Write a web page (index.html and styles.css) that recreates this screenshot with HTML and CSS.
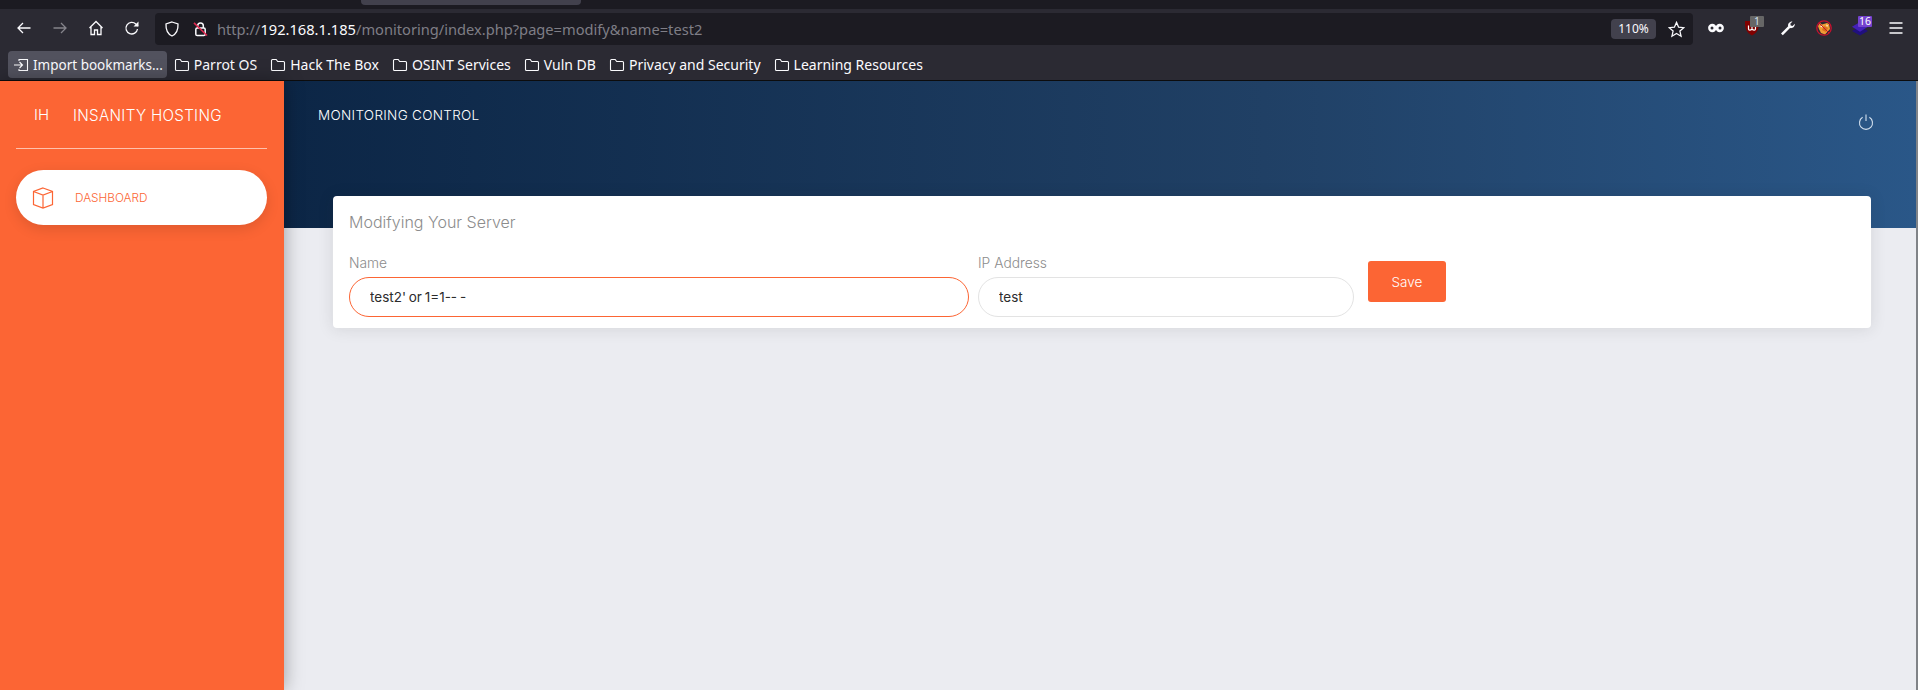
FILE: index.html
```html
<!DOCTYPE html>
<html lang="en">
<head>
    <meta charset="UTF-8">
    <meta name="viewport" content="width=device-width, initial-scale=1.0">
    <title>Monitoring Control</title>
    <link rel="stylesheet" href="styles.css">
</head>
<body>
    <div class="tabstrip"><div class="tab-edge"></div></div>

    <div class="toolbar">
        <div class="nav-buttons">
            <svg class="tool-icon" viewBox="0 0 16 16"><path d="M14.500 8H2M7 3L2 8l5 5"/></svg>
            <svg class="tool-icon dim" viewBox="0 0 16 16"><path d="M1.500 8H14M9 3l5 5-5 5"/></svg>
            <svg class="tool-icon" viewBox="0 0 16 16"><path d="M1.500 8L8 1.500 14.500 8M3 7v7.500h3.500V10h3v4.500H13V7"/></svg>
            <svg class="tool-icon" viewBox="0 0 16 16"><path d="M13.500 9a5.800 5.800 0 1 1-1.700-5L14 6"/><path class="arrow-head" d="M14.500 1.500V6.500H9.500z"/></svg>
        </div>
        <div class="urlbar">
            <svg class="shield" viewBox="0 0 16 16"><path d="M8 1l6 2c.3 6-1.700 10-6 12C3.700 13 1.700 9 2 3z"/></svg>
            <svg class="lock" viewBox="0 0 16 16">
                <rect x="3" y="7" width="10" height="8" rx="1.500" fill="none" stroke="#fbfbfe" stroke-width="1.600"/>
                <path d="M5 7V4.500a3 3 0 0 1 6 0V7" fill="none" stroke="#fbfbfe" stroke-width="1.600"/>
                <path d="M1 1.500L15 15" stroke="#e22850" stroke-width="1.600"/>
            </svg>
            <div class="url"><span class="url-dim">http://</span>192.168.1.185<span class="url-dim">/monitoring/index.php?page=modify&amp;name=test2</span></div>
            <div class="zoom-level">110%</div>
            <svg class="star" viewBox="0 0 16 16"><path d="M8 1.300l2 4.500 4.900.5-3.700 3.200 1.100 4.800L8 11.800l-4.300 2.500 1.100-4.800L1.100 6.300 6 5.800z"/></svg>
        </div>
        <div class="extensions">
            <div class="ext">
                <svg viewBox="0 0 16 16"><circle cx="4.300" cy="8" r="4.200" fill="#fbfbfe"/><circle cx="11.700" cy="8" r="4.200" fill="#fbfbfe"/><circle cx="4" cy="8" r="1.500" fill="#2b2a33"/><circle cx="12" cy="8" r="1.500" fill="#2b2a33"/></svg>
            </div>
            <div class="ext">
                <svg viewBox="0 0 16 16"><path d="M1 1h14c.3 7-1.200 11.500-7 14.500C2.200 12.500.7 8 1 1z" fill="#800000"/><path d="M4.500 5.500v3.500c0 1.500 2 1.500 3.500.2 1.500 1.300 3.500 1.300 3.500-.2V5.500M8 5.500v3.700" fill="none" stroke="#fff" stroke-width="1.200"/></svg>
                <span class="ext-badge badge-grey">1</span>
            </div>
            <div class="ext">
                <svg viewBox="0 0 16 16"><path d="M1 13.500l7.200-7.200c-.7-2.400 1.400-5 4.300-4.800L10.300 3.700l.4 1.900 1.900.4 2.200-2.200c.3 2.900-2.400 5-4.800 4.300L2.800 15.300z" fill="#fbfbfe"/></svg>
            </div>
            <div class="ext">
                <svg viewBox="0 0 16 16"><path d="M2 6l2-3 2 1.500 5-1.500 2 1 1 5-5 5.500-4-1.500-2-4z" fill="#f09a35"/><path d="M6 10l2-4 4 2-2 4z" fill="#d96f1d"/><path d="M4 6.500l2-1 .5 2zM10 4.500l2 1-1 1.500z" fill="#fdf3e4"/><circle cx="8" cy="8" r="7.200" fill="none" stroke="#c8102e" stroke-width="1.300"/><path d="M3 3l10 10" stroke="#c8102e" stroke-width="1"/></svg>
            </div>
            <div class="ext">
                <svg viewBox="0 0 16 16"><path d="M8 6.500l8 4.500-8 4.500L0 11z" fill="#20107e"/><path d="M8 2l8 4.800-8 5L0 6.800z" fill="#4420b8"/></svg>
                <span class="ext-badge badge-purple">16</span>
            </div>
            <div class="ext">
                <svg viewBox="0 0 16 16"><path d="M1.500 3h13M1.500 8h13M1.500 13h13" stroke="#fbfbfe" stroke-width="1.500" fill="none"/></svg>
            </div>
        </div>
    </div>

    <div class="bookmarks">
        <div class="bookmark import">
            <svg class="bookmark-icon" viewBox="0 0 16 16"><path d="M6 4V2.500h8.500v11H6V12M1 8h8M6.500 5L9.500 8l-3 3"/></svg>
            Import bookmarks...
        </div>
        <div class="bookmark"><svg class="bookmark-icon" viewBox="0 0 16 16"><path d="M1.500 3.500a1 1 0 0 1 1-1h3.700l1.500 2h5.800a1 1 0 0 1 1 1v7a1 1 0 0 1-1 1h-11a1 1 0 0 1-1-1z"/></svg>Parrot OS</div>
        <div class="bookmark"><svg class="bookmark-icon" viewBox="0 0 16 16"><path d="M1.500 3.500a1 1 0 0 1 1-1h3.700l1.500 2h5.800a1 1 0 0 1 1 1v7a1 1 0 0 1-1 1h-11a1 1 0 0 1-1-1z"/></svg>Hack The Box</div>
        <div class="bookmark"><svg class="bookmark-icon" viewBox="0 0 16 16"><path d="M1.500 3.500a1 1 0 0 1 1-1h3.700l1.500 2h5.800a1 1 0 0 1 1 1v7a1 1 0 0 1-1 1h-11a1 1 0 0 1-1-1z"/></svg>OSINT Services</div>
        <div class="bookmark"><svg class="bookmark-icon" viewBox="0 0 16 16"><path d="M1.500 3.500a1 1 0 0 1 1-1h3.700l1.500 2h5.800a1 1 0 0 1 1 1v7a1 1 0 0 1-1 1h-11a1 1 0 0 1-1-1z"/></svg>Vuln DB</div>
        <div class="bookmark"><svg class="bookmark-icon" viewBox="0 0 16 16"><path d="M1.500 3.500a1 1 0 0 1 1-1h3.700l1.500 2h5.800a1 1 0 0 1 1 1v7a1 1 0 0 1-1 1h-11a1 1 0 0 1-1-1z"/></svg>Privacy and Security</div>
        <div class="bookmark"><svg class="bookmark-icon" viewBox="0 0 16 16"><path d="M1.500 3.500a1 1 0 0 1 1-1h3.700l1.500 2h5.800a1 1 0 0 1 1 1v7a1 1 0 0 1-1 1h-11a1 1 0 0 1-1-1z"/></svg>Learning Resources</div>
    </div>

    <div class="wrapper">
        <div class="sidebar">
            <div class="logo">
                <span class="logo-mini">IH</span>
                <span class="logo-name">INSANITY HOSTING</span>
            </div>
            <div class="nav-item">
                <svg class="nav-icon" viewBox="0 0 22 22"><path d="M11 1l9.500 3.500v13L11 21l-9.500-3.500v-13zM1.500 4.500L11 8l9.500-3.500M11 8v13"/></svg>
                <span>DASHBOARD</span>
            </div>
        </div>
        <div class="main">
            <div class="panel-header">
                <span class="brand">MONITORING CONTROL</span>
                <svg class="power" viewBox="0 0 16 16"><path d="M4.600 3.300a6.500 6.500 0 1 0 6.800 0M8 .5v6.500"/></svg>
            </div>
            <div class="card">
                <h5 class="card-title">Modifying Your Server</h5>
                <form class="form-row">
                    <div class="field field-name">
                        <label for="name">Name</label>
                        <input type="text" id="name" class="focused" value="test2' or 1=1-- -">
                    </div>
                    <div class="field field-ip">
                        <label for="ip">IP Address</label>
                        <input type="text" id="ip" value="test">
                    </div>
                    <button type="button" class="save">Save</button>
                </form>
            </div>
        </div>
        <div class="scrollbar"></div>
    </div>
</body>
</html>
```

FILE: styles.css
```css
* {
    box-sizing: border-box;
}

html,
body {
    height: 100%;
}

body {
    margin: 0;
    display: flex;
    flex-direction: column;
    overflow: hidden;
    font-family: 'Inter', sans-serif;
    background-color: #ebecf1;
}

/* browser chrome */
.tabstrip {
    height: 9px;
    padding-left: 361px;
    background-color: #1c1b22;
}

.tab-edge {
    width: 220px;
    height: 5px;
    background-color: #42414d;
    border-radius: 0 0 4px 4px;
}

.toolbar {
    height: 38px;
    display: flex;
    align-items: center;
    background-color: #2b2a33;
    color: #fbfbfe;
}

.nav-buttons {
    width: 155px;
    display: flex;
    gap: 20px;
    padding-left: 16px;
}

.tool-icon {
    width: 16px;
    height: 16px;
    fill: none;
    stroke: #fbfbfe;
    stroke-width: 1.300;
}

.tool-icon.dim {
    stroke: #85848b;
}

.arrow-head {
    fill: #fbfbfe;
    stroke: none;
}

.urlbar {
    width: 1538px;
    height: 32px;
    margin-top: 2px;
    display: flex;
    align-items: center;
    padding-left: 9px;
    background-color: #1c1b22;
    border-radius: 4px;
}

.shield {
    width: 16px;
    height: 16px;
    fill: none;
    stroke: #fbfbfe;
    stroke-width: 1.300;
}

.lock {
    width: 15px;
    height: 16px;
    margin-left: 13px;
}

.url {
    flex: 1;
    margin-left: 9px;
    font-family: 'Noto Sans', sans-serif;
    font-size: 14.650px;
    color: #fbfbfe;
}

.url-dim {
    color: #7f7e86;
}

.zoom-level {
    width: 45px;
    height: 20px;
    margin-right: 12px;
    font-family: 'Noto Sans', sans-serif;
    font-size: 12px;
    line-height: 20px;
    text-align: center;
    background-color: #42414d;
    border-radius: 4px;
}

.star {
    width: 17px;
    height: 17px;
    margin-right: 8px;
    fill: none;
    stroke: #fbfbfe;
    stroke-width: 1.200;
}

.extensions {
    display: flex;
    flex: 1;
    padding-left: 5px;
}

.ext {
    position: relative;
    width: 36px;
    height: 36px;
    display: flex;
    align-items: center;
    justify-content: center;
}

.ext svg {
    width: 16px;
    height: 16px;
}

.ext-badge {
    position: absolute;
    top: 6px;
    left: 16px;
    width: 14px;
    height: 11px;
    font-family: 'Noto Sans', sans-serif;
    font-size: 10.500px;
    line-height: 11px;
    text-align: center;
    border-radius: 1px;
}

.badge-grey {
    background-color: #666666;
    color: #cfe0ef;
}

.badge-purple {
    background-color: #7543cf;
    color: #ffffff;
}

.bookmarks {
    height: 34px;
    display: flex;
    align-items: center;
    gap: 13px;
    padding: 2px 0 0 8px;
    background-color: #2b2a33;
    border-bottom: 1px solid #0c0c0d;
    color: #fbfbfe;
    font-family: 'Noto Sans', sans-serif;
    font-size: 14px;
}

.bookmark {
    height: 27px;
    display: flex;
    align-items: center;
    gap: 4px;
    white-space: nowrap;
}

.bookmark.import {
    margin-right: -6px;
    padding: 0 4px 0 5px;
    font-size: 13.500px;
    background-color: #52525e;
    border-radius: 4px;
}

.bookmark-icon {
    width: 16px;
    height: 16px;
    fill: none;
    stroke: #fbfbfe;
    stroke-width: 1.100;
}

/* page */
.wrapper {
    flex: 1;
    display: flex;
    min-height: 0;
    font-family: 'Inter', sans-serif;
    font-weight: 300;
}

.sidebar {
    width: 284px;
    flex-shrink: 0;
    padding: 0 17px 0 16px;
    background-color: #fc6534;
    box-shadow: 0 0 18px rgba(0, 0, 0, 0.35);
    position: relative;
    z-index: 2;
}

.logo {
    height: 68px;
    display: flex;
    align-items: center;
    padding: 2px 0 0 18px;
    border-bottom: 1px solid rgba(255, 255, 255, 0.6);
    color: #ffffff;
}

.logo-mini {
    width: 39px;
    font-size: 15px;
    margin-top: -2px;
}

.logo-name {
    font-size: 15.200px;
    letter-spacing: 0.300px;
}

.nav-item {
    height: 55px;
    margin-top: 21px;
    display: flex;
    align-items: center;
    padding: 1px 0 0 16px;
    background-color: #ffffff;
    border-radius: 28px;
    color: #fc6534;
    font-size: 11.800px;
    box-shadow: 0 4px 14px rgba(0, 0, 0, 0.12);
}

.nav-icon {
    width: 22px;
    height: 22px;
    margin-right: 21px;
    fill: none;
    stroke: #fc6534;
    stroke-width: 1.200;
}

.main {
    flex: 1;
    min-width: 0;
}

.panel-header {
    height: 147px;
    display: flex;
    align-items: flex-start;
    justify-content: space-between;
    padding: 26px 42px 0 34px;
    background: linear-gradient(90deg, #0c2646 0%, #204065 60%, #2a5788 100%);
    color: #ffffff;
}

.brand {
    font-size: 13.500px;
    letter-spacing: 0.300px;
}

.power {
    width: 16px;
    height: 16px;
    margin-top: 7px;
    fill: none;
    stroke: #d3e0ee;
    stroke-width: 1.100;
}

.card {
    height: 132px;
    margin: -32px 45px 0 49px;
    padding: 17px 16px 0;
    background-color: #ffffff;
    border-radius: 4px;
    box-shadow: 0 1px 15px 1px rgba(39, 39, 39, 0.1);
    position: relative;
}

.card-title {
    margin: 0;
    height: 19px;
    font-size: 16px;
    font-weight: 300;
    line-height: 19px;
    color: #8c8c8c;
}

.form-row {
    display: flex;
    align-items: flex-start;
    margin-top: 24px;
}

.field {
    display: flex;
    flex-direction: column;
}

.field-name {
    width: 620px;
    margin-right: 9px;
}

.field-ip {
    width: 376px;
    margin-right: 14px;
}

label {
    height: 14px;
    margin: 0 0 7px;
    font-size: 13.800px;
    line-height: 14px;
    color: #8c8c8c;
}

input {
    height: 40px;
    padding: 0 20px;
    font-family: 'Inter', sans-serif;
    font-size: 13.500px;
    color: #2c2c2c;
    background-color: #ffffff;
    border: 1px solid #e3e3e3;
    border-radius: 30px;
    outline: none;
}

input.focused {
    border-color: #fc6534;
    word-spacing: -1px;
}

.save {
    width: 78px;
    height: 41px;
    margin-top: 5px;
    font-family: 'Inter', sans-serif;
    font-size: 13.500px;
    font-weight: 300;
    color: #ffffff;
    background-color: #fc6534;
    border: none;
    border-radius: 3px;
}

.scrollbar {
    width: 2px;
    flex-shrink: 0;
    background-color: #808387;
}
```
